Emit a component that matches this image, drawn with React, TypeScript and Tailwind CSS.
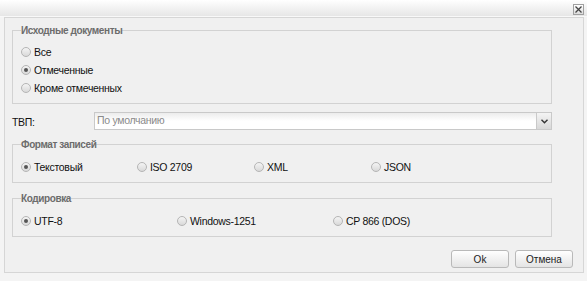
import React from "react";

function Radio({ label, checked }: { label: string; checked?: boolean }) {
  return (
    <div className="flex items-center h-[18px]">
      <span className="w-[10px] h-[10px] rounded-full border border-[#b5b5b5] bg-gradient-to-b from-[#f4f4f4] to-[#d9d9d9] flex items-center justify-center shrink-0">
        {checked && <span className="w-[4px] h-[4px] rounded-full bg-[#555]" />}
      </span>
      <span className="ml-[3px] text-[10.5px] tracking-[-0.3px] text-[#111] leading-none">{label}</span>
    </div>
  );
}

function Group({ title, className, children }: { title: string; className?: string; children: React.ReactNode }) {
  return (
    <fieldset className={"w-[540px] border border-[#d2d2d2] px-[8px] m-0 " + (className ?? "")}>
      <legend className="px-0 text-[10px] tracking-[-0.4px] leading-[13px] font-bold text-[#6c6c6c]">{title}</legend>
      {children}
    </fieldset>
  );
}

export default function App() {
  return (
    <div
      className="w-[587px] h-[281px] bg-[#f4f4f4] flex flex-col overflow-hidden"
      style={{ fontFamily: '"Liberation Sans", Arial, sans-serif' }}
    >
      <div className="h-[17px] bg-gradient-to-b from-[#ffffff] to-[#e6e6e6] border-b border-[#f8f8f8] flex items-start justify-end pr-[3px] pt-[4px] shrink-0">
        <div className="w-[11px] h-[11px] border border-[#a0a0a0] bg-gradient-to-b from-[#ffffff] to-[#dcdcdc] flex items-center justify-center">
          <svg width="7" height="7" viewBox="0 0 7 7">
            <path d="M0.5 0.5 L6.5 6.5 M6.5 0.5 L0.5 6.5" stroke="#444" strokeWidth="1.3" />
          </svg>
        </div>
      </div>
      <div className="ml-[4px] mr-[3px] mt-[0px] h-[256px] border border-[#d6d6d6] bg-[#f0f0f0] pl-[7px] pr-[10px] pt-[6px] flex flex-col">
        <Group title="Исходные документы" className="pb-[6px]">
          <div className="mt-[6px] flex flex-col">
            <Radio label="Все" />
            <Radio label="Отмеченные" checked />
            <Radio label="Кроме отмеченных" />
          </div>
        </Group>
        <div className="mt-[8px] flex items-center h-[18px]">
          <span className="w-[82px] text-[10.5px] tracking-[-0.3px] text-[#111] pt-[3px]">ТВП:</span>
          <div className="w-[458px] h-[18px] flex border border-[#c9c9c9] bg-white">
            <div className="flex-1 flex items-center pl-[2px] text-[10.5px] tracking-[-0.3px] text-[#8a8a8a] bg-gradient-to-b from-[#ececec] via-white to-white">
              По умолчанию
            </div>
            <div className="w-[15px] h-full border-l border-[#c9c9c9] bg-gradient-to-b from-[#f4f4f4] to-[#d8d8d8] flex items-center justify-center">
              <svg width="7" height="5" viewBox="0 0 7 5">
                <path d="M0.5 0.8 L3.5 3.8 L6.5 0.8" stroke="#333" strokeWidth="1.4" fill="none" />
              </svg>
            </div>
          </div>
        </div>
        <Group title="Формат записей" className="mt-[8px] pb-[6px]">
          <div className="mt-[7px] grid grid-cols-[116px_117px_117px_auto]">
            <Radio label="Текстовый" checked />
            <Radio label="ISO 2709" />
            <Radio label="XML" />
            <Radio label="JSON" />
          </div>
        </Group>
        <Group title="Кодировка" className="mt-[9px] pb-[6px]">
          <div className="mt-[7px] grid grid-cols-[156px_156px_auto]">
            <Radio label="UTF-8" checked />
            <Radio label="Windows-1251" />
            <Radio label="CP 866 (DOS)" />
          </div>
        </Group>
        <div className="mt-auto mb-[4px] flex justify-end gap-[6px]">
          <button className="w-[58px] h-[18px] rounded-[3px] border border-[#b9b9b9] bg-gradient-to-b from-[#ffffff] to-[#e4e4e4] text-[10px] text-[#222]">
            Ok
          </button>
          <button className="w-[58px] h-[18px] rounded-[3px] border border-[#b9b9b9] bg-gradient-to-b from-[#ffffff] to-[#e4e4e4] text-[10px] text-[#222]">
            Отмена
          </button>
        </div>
      </div>
    </div>
  );
}
